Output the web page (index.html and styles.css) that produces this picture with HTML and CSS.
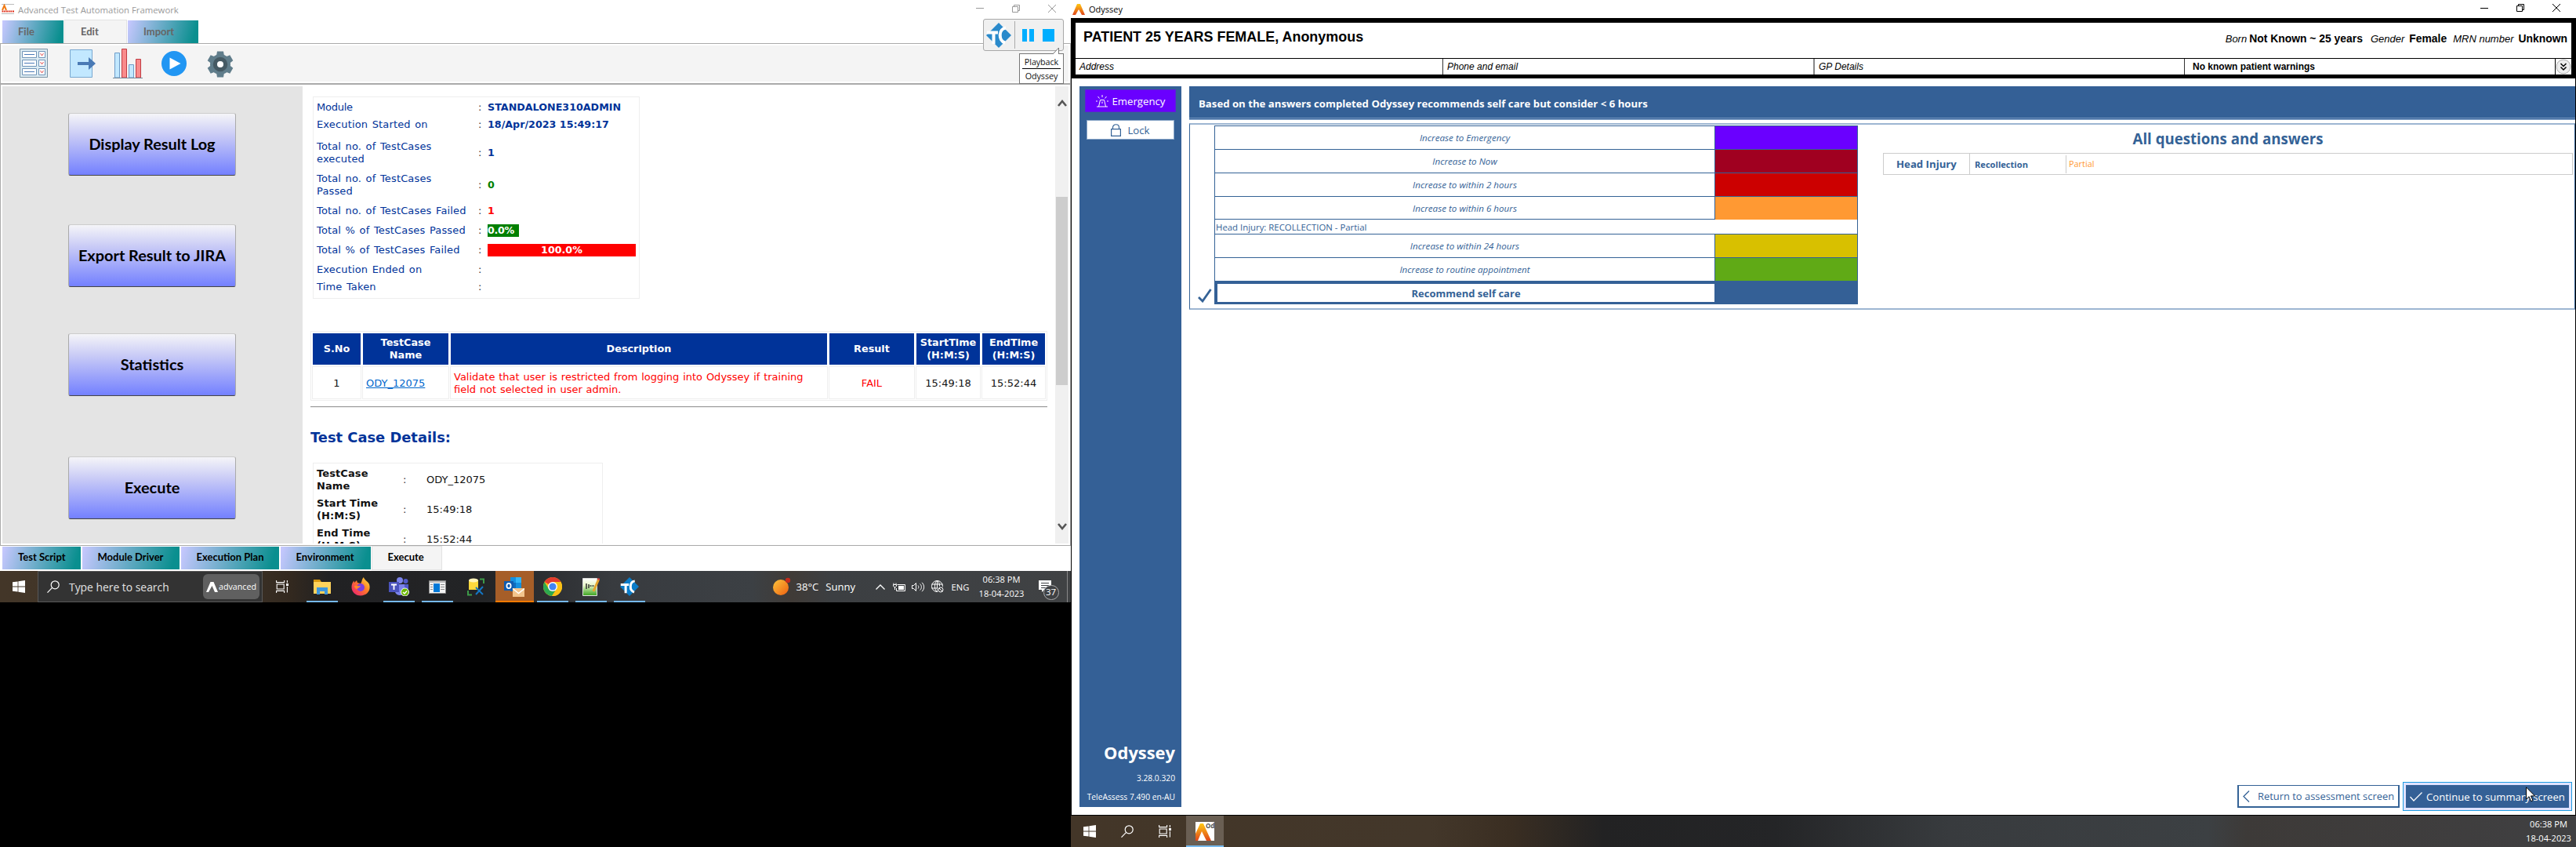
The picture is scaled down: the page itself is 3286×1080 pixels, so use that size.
FILE: index.html
```html
<!DOCTYPE html>
<html lang="en">
<head>
<meta charset="utf-8">
<title>Test Automation and Odyssey</title>
<link rel="stylesheet" href="styles.css">
</head>
<body>
<svg width="0" height="0" class="defs" aria-hidden="true">
  <defs>
    <linearGradient id="flame" x1="0" y1="0" x2="0" y2="1"><stop offset="0" stop-color="#ffc814"/><stop offset="1" stop-color="#e0451b"/></linearGradient>
    <linearGradient id="sun" x1="0" y1="0" x2="1" y2="1"><stop offset="0" stop-color="#fbc53c"/><stop offset="1" stop-color="#ef5f10"/></linearGradient>
    <linearGradient id="fox" x1="1" y1="0" x2="0" y2="1"><stop offset="0" stop-color="#ffe93f"/><stop offset=".45" stop-color="#ff7a28"/><stop offset="1" stop-color="#e8147c"/></linearGradient>
    <linearGradient id="pad" x1="0" y1="0" x2="0" y2="1"><stop offset="0" stop-color="#fff"/><stop offset=".4" stop-color="#e7f6c8"/><stop offset="1" stop-color="#39a31e"/></linearGradient>
    <symbol id="start" viewBox="0 0 16 16"><path fill="#fff" d="M0 2.3 6.6 1.4V7.6H0zM7.4 1.3 16 0V7.6H7.4zM0 8.4H6.6V14.6L0 13.7zM7.4 8.4H16V16L7.4 14.7z"/></symbol>
    <symbol id="lens" viewBox="0 0 16 16"><g fill="none" stroke="#fff" stroke-width="1.2"><circle cx="10.2" cy="5.8" r="5"/><path d="M6.6 9.4.5 15.6"/></g></symbol>
    <symbol id="tasks" viewBox="0 0 16 16"><path fill="none" stroke="#fff" stroke-width="1.1" d="M.6 0v3M.6 13v3M10.6 0v3M10.6 13v3M.6 2.6h10M.6 13.4h10M1.2 5h9v6h-9zM14.4 0v3M14.4 8v7.5"/><path fill="#fff" d="M13 4h3v3h-3z"/></symbol>
    <symbol id="tc" viewBox="0 0 32 32"><path fill="currentColor" d="M16 0 32 16 16 32 0 16z"/><path fill="none" stroke="#fff" stroke-width="4" d="M1 12.500h14M9.500 12v15M25 6.500c-9 1-10 16-1 19"/></symbol>
    <symbol id="restore" viewBox="0 0 10 10"><path fill="none" stroke="currentColor" d="M.5 2.500h7v7h-7zM2.500 2V.5h7v7H8"/></symbol>
    <symbol id="cross" viewBox="0 0 10 10"><path fill="none" stroke="currentColor" d="M0 0l10 10M10 0 0 10"/></symbol>
  </defs>
</svg>

<section class="screen-left">
  <div class="fw">
    <header class="fw-title">
      <svg class="fw-logo" width="16" height="13" viewBox="0 0 16 13"><path fill="#bbb" d="M0 0h16v1H0zM0 12h16v1H0z"/><path fill="none" stroke="#f07a14" stroke-width="2" d="M1 8 3.500 2 6 8"/><path stroke="#e0301c" stroke-width="2" stroke-dasharray="2 .7" d="M.5 9.500h15.500"/></svg>
      <span>Advanced Test Automation Framework</span>
      <div class="winbtns"><i class="min"></i><svg width="10" height="10"><use href="#restore"/></svg><svg width="10" height="10"><use href="#cross"/></svg></div>
    </header>
    <nav class="tabs tabs-top">
      <span class="tab w78">File</span><span class="tab on w80">Edit</span><span class="tab w89">Import</span>
    </nav>
    <div class="frame">
      <div class="tools">
        <svg class="t1" width="36" height="37" viewBox="0 0 36 37"><path fill="#dcebf2" stroke="#7d95a5" d="M.5.5h35v36H.5z"/><g fill="#fff" stroke="#6f94b8"><path d="M3.500 3.500h18v8h-18zM3.500 14.500h18v8h-18zM3.500 25.500h18v8h-18zM24.500 3.500h8v8h-8zM24.500 14.500h8v8h-8zM24.500 25.500h8v8h-8z"/></g><path stroke="#4a7ab8" d="M6 7.500h13M6 18.500h13M6 29.500h13"/><path fill="none" stroke="#e05050" d="M26.500 6l2 3 2-3M26.500 17l2 3 2-3M26.500 28l2 3 2-3"/></svg>
        <svg class="t2" width="33" height="36" viewBox="0 0 33 36"><path fill="#c2e8ff" stroke="#7aa8d0" d="M.5.5h28v35H.5z"/><path fill="#4a7ab5" d="M10 16h14V10l9 8-9 8v-6H10z"/></svg>
        <svg class="t3" width="38" height="38" viewBox="0 0 38 38"><g fill="#c2e8ff" stroke="#6d9cc8"><path d="M2.500 5.500h6V37h-6zM20.500 20.500h6V37h-6z"/></g><g fill="#f98b8b" stroke="#c03c44"><path d="M11.500.5h6V37h-6zM29.500 13.500h6V37h-6z"/></g><path stroke="#788b9c" d="M0 37.500h38"/></svg>
        <svg class="t4" width="32" height="32" viewBox="0 0 32 32"><circle cx="16" cy="16" r="16" fill="#2196f3"/><path fill="#fff" d="M10.500 8.500 24.500 16l-14 7.500z"/></svg>
        <svg class="t5" width="34" height="34" viewBox="-17 -17 34 34"><g fill="#607d8b"><circle r="13"/><path id="cog" d="M-4-16.500h8l1 6H-5zM-4 16.500h8l1-6H-5z"/><use href="#cog" transform="rotate(60)"/><use href="#cog" transform="rotate(120)"/></g><circle r="6.500" fill="none" stroke="#455a64" stroke-width="5.500"/><circle r="4" fill="#fff"/></svg>
      </div>
      <div class="work">
        <aside class="actions">
          <button>Display Result Log</button><button>Export Result to JIRA</button><button class="third">Statistics</button><button class="fourth">Execute</button>
        </aside>
        <main class="report">
          <div class="summary">
            <div class="row h22"><span class="k tight">Module</span><i>:</i><b>STANDALONE310ADMIN</b></div>
            <div class="row h22"><span class="k">Execution Started on</span><i>:</i><b class="wide">18/Apr/2023 15:49:17</b></div>
            <div class="row h41 first"><span class="k">Total no. of TestCases<br>executed</span><i>:</i><b>1</b></div>
            <div class="row h41"><span class="k">Total no. of TestCases<br>Passed</span><i>:</i><b class="ok">0</b></div>
            <div class="row h25"><span class="k">Total no. of TestCases Failed</span><i>:</i><b class="bad">1</b></div>
            <div class="row h25"><span class="k">Total % of TestCases Passed</span><i>:</i><b class="bar-ok">0.0%</b></div>
            <div class="row h25"><span class="k">Total % of TestCases Failed</span><i>:</i><b class="bar-bad">100.0%</b></div>
            <div class="row h25"><span class="k">Execution Ended on</span><i>:</i></div>
            <div class="row h19"><span class="k">Time Taken</span><i>:</i></div>
          </div>
          <div class="results">
            <b>S.No</b><b>TestCase<br>Name</b><b>Description</b><b>Result</b><b>StartTime<br>(H:M:S)</b><b>EndTime<br>(H:M:S)</b>
            <span>1</span><span class="left"><a>ODY_12075</a></span><span class="left red desc">Validate that user is restricted from logging into Odyssey if training<br>field not selected in user admin.</span><span class="red">FAIL</span><span>15:49:18</span><span>15:52:44</span>
          </div>
          <div class="rule"></div>
          <h2>Test Case Details:</h2>
          <div class="details">
            <b>TestCase<br>Name</b><i>:</i><span>ODY_12075</span>
            <b>Start Time<br>(H:M:S)</b><i>:</i><span>15:49:18</span>
            <b>End Time<br>(H:M:S)</b><i>:</i><span>15:52:44</span>
          </div>
        </main>
        <div class="scroll">
          <svg width="12" height="9" viewBox="0 0 12 9"><path fill="none" stroke="#555" stroke-width="2.600" d="M1 8l5-6 5 6"/></svg>
          <div class="thumb"></div>
          <svg width="12" height="9" viewBox="0 0 12 9"><path fill="none" stroke="#555" stroke-width="2.600" d="M1 1l5 6 5-6"/></svg>
        </div>
      </div>
    </div>
    <nav class="tabs tabs-bottom">
      <span class="tab w99">Test Script</span><span class="tab w124">Module Driver</span><span class="tab w125">Execution Plan</span><span class="tab w115">Environment</span><span class="tab on w88">Execute</span>
    </nav>
    <div class="player">
      <svg class="tclogo" width="32" height="32"><use href="#tc"/></svg><i class="sep"></i><i class="pause"></i><i class="stop"></i>
    </div>
    <div class="callout"><span>Playback</span><span>Odyssey</span>
      <svg width="10" height="9" viewBox="0 0 10 9"><path fill="#fff" stroke="#777" d="M0 8 7.500 0V8"/></svg></div>
  </div>

  <footer class="taskbar tb-left">
    <svg class="go" width="16" height="16"><use href="#start"/></svg>
    <div class="search"><svg width="16" height="16"><use href="#lens"/></svg><span>Type here to search</span>
      <div class="adv"><svg width="15" height="13" viewBox="0 0 15 13"><path fill="#fff" d="M5.500 0h4L15 13h-4L7.500 5 3 13H0z"/></svg>advanced</div></div>
    <svg class="tv" width="16" height="16"><use href="#tasks"/></svg>
    <div class="apps">
      <span class="app run"><svg width="22" height="19" viewBox="0 0 22 19"><path fill="#d99a10" d="M0 0h8l2 3v3H0z"/><path fill="#ffd35c" d="M0 3h22v15H0z"/><path fill="#3f97dc" d="M4 19v-9h14v9h-4v-4H8v4z"/></svg></span>
      <span class="app"><svg width="24" height="24" viewBox="0 0 24 24"><path fill="url(#fox)" d="M12 23.500C5 23.500.5 18.500.5 12.500.5 9 2 6 3.500 4.500L4 7l3-3 1 3 4 1c2-2 1-5 4-8 0 3 5 5 7 9 2.500 8-3 14.500-11 14.500z"/><circle cx="12" cy="13" r="5" fill="#7a3fe0"/><path fill="#ff8a28" d="M4 11c4-1 4 1 8 0-1 3-4 2-4 4-3 0-4-2-4-4z"/></svg></span>
      <span class="app run"><svg width="26" height="24" viewBox="0 0 26 24"><circle cx="14" cy="4" r="4" fill="#7b83eb"/><circle cx="21.500" cy="5" r="3" fill="#5059c9"/><path fill="#5059c9" d="M17 9h8v9c0 3-4 4-6 2z"/><path fill="#7b83eb" d="M8 9h12v9c0 6-10 7-12 1z"/><path fill="#4b53bc" d="M0 6h13v13H0z"/><path fill="none" stroke="#fff" stroke-width="1.800" d="M3 9.500h7M6.500 9.500V16"/><circle cx="20.500" cy="19" r="5" fill="#6bb700" stroke="#fff"/><path fill="none" stroke="#fff" stroke-width="1.500" d="M18 19l2 2 3-3.500"/></svg></span>
      <span class="app run"><svg width="22" height="17" viewBox="0 0 22 17"><path fill="#f3f3f3" stroke="#888" d="M.5.5h21v16H.5z"/><path fill="#0078d7" d="M6 4h8v11H6z"/><path stroke="#888" d="M2 5.500h3M2 8.500h3M2 11.500h3M15 5.500h5M15 8.500h5M15 11.500h5M1 2h20"/></svg></span>
      <span class="app"><svg width="22" height="23" viewBox="0 0 22 23"><path fill="#ffd83c" d="M2 3h12v12H2z"/><ellipse cx="8" cy="3" rx="6" ry="2.500" fill="#fff3b8"/><path fill="none" stroke="#3c9a48" stroke-width="2" d="M16 1.500h5V7M1 16v5.500h5"/><path fill="none" stroke="#1476c4" stroke-width="2" d="M11 12l9 9M20 11l-9 10"/></svg></span>
      <span class="app mail"><svg width="26" height="25" viewBox="0 0 26 25"><path fill="#0f6cbd" d="M8 0h14v18H8z"/><path fill="#32b5f5" d="M15 0h7v7h-7z"/><path fill="#1490df" d="M8 0h7v7H8zM15 7h7v7h-7z"/><path fill="#0f5cb0" d="M0 5h12v12H0z"/><ellipse cx="6" cy="11" rx="2.600" ry="3.200" fill="none" stroke="#fff" stroke-width="1.800"/><path fill="#f2c48d" d="M11 14h15v11H11z"/><path fill="none" stroke="#fff" stroke-width="1.500" d="M11 14.500l7.500 6 7.500-6"/></svg></span>
      <span class="app run"><svg width="24" height="24" viewBox="0 0 24 24"><circle cx="12" cy="12" r="12" fill="#fbc116"/><path fill="#e33b2e" d="M12 12 1.600 6A12 12 0 0 1 22.400 6H12z"/><path fill="#2da94f" d="M12 12l-5 3L1.600 6A12 12 0 0 0 11 24l6-9z"/><path fill="#fbc116" d="M12 6h10.400A12 12 0 0 1 11 24l6-9z"/><circle cx="12" cy="12" r="6" fill="#fff"/><circle cx="12" cy="12" r="4.600" fill="#4285f4"/></svg></span>
      <span class="app run"><svg width="22" height="23" viewBox="0 0 22 23"><path fill="url(#pad)" stroke="#ddd" d="M.5.5h18v22H.5z"/><path stroke="#333" stroke-width="1.500" d="M5 7v7M8 8v5M9.500 10h2M12.500 10h2"/><path stroke="#e6a52c" stroke-width="3" d="M20.500 2 14 17"/><path stroke="#d44" stroke-width="3" d="M21 .5l-.7 2"/></svg></span>
      <span class="app run tcblue"><svg width="24" height="24"><use href="#tc"/></svg></span>
    </div>
    <div class="weather"><svg width="24" height="24" viewBox="0 0 24 24"><circle cx="10" cy="13" r="10" fill="url(#sun)"/><circle cx="19" cy="4" r="3.200" fill="#c42b1c"/></svg><span>38°C</span><span>Sunny</span></div>
    <div class="tray">
      <svg width="12" height="7" viewBox="0 0 12 7"><path fill="none" stroke="#fff" stroke-width="1.300" d="M.5 6.500 6 1l5.500 5.500"/></svg>
      <svg width="16" height="11" viewBox="0 0 16 11"><path fill="none" stroke="#fff" d="M5.500 2.500h10v8h-11V7M1 .5v2M4 .5v2M.5 2.500h4v2l-1 1h-2l-1-1zM2.500 6v3"/><path fill="#fff" d="M7 4h7v5H7z"/></svg>
      <svg width="17" height="13" viewBox="0 0 17 13"><path fill="none" stroke="#fff" d="M.5 4.500h2l3-3v10l-3-3h-2zM8 4.500c1 1 1 3 0 4M10.500 2.500c2.500 2 2.500 6 0 8M13 .8c3.500 3 3.500 8.400 0 11.400"/></svg>
      <svg width="16" height="16" viewBox="0 0 16 16"><g fill="none" stroke="#fff"><circle cx="7.500" cy="7.500" r="7"/><ellipse cx="7.500" cy="7.500" rx="3" ry="7"/><path d="M.5 5h14M.5 10h14M7.500 0v15"/></g><circle cx="12" cy="12" r="4.500" fill="#3f4144"/><circle cx="12" cy="12" r="3" fill="none" stroke="#fff"/><path stroke="#fff" d="M10 10l4 4"/></svg>
      <span>ENG</span>
    </div>
    <div class="clock"><span>06:38 PM</span><span>18-04-2023</span></div>
    <div class="notes"><svg width="16" height="16" viewBox="0 0 16 16"><path fill="#fff" d="M0 0h16v12H7l-3 3v-3H0z"/><path stroke="#3f4144" d="M3 3.500h10M3 6.500h10M3 9.500h6"/></svg><em>37</em></div>
  </footer>
</section>

<section class="screen-right">
  <header class="od-title">
    <svg width="16" height="14" viewBox="0 0 16 14"><path fill="url(#flame)" d="M6 0h4l6 14h-4L8 7 4 14H0z"/></svg><span>Odyssey</span>
    <div class="winbtns dark"><i class="min"></i><svg width="10" height="10"><use href="#restore"/></svg><svg width="10" height="10"><use href="#cross"/></svg></div>
  </header>
  <div class="patient">
    <div class="who"><b>PATIENT 25 YEARS FEMALE, Anonymous</b>
      <p><i>Born</i><b class="m1">Not Known ~ 25 years</b><i class="m2">Gender</i><b class="m3">Female</b><i class="m4">MRN number</i><b class="m5">Unknown</b></p></div>
    <div class="facts"><i>Address</i><i>Phone and email</i><i class="grey">GP Details</i><b>No known patient warnings</b>
      <span class="more"><svg width="20" height="20" viewBox="0 0 20 20"><circle cx="10" cy="10" r="9" fill="#eee" stroke="#aaa"/><path fill="none" stroke="#000" stroke-width="1.500" d="M6.500 6l3.500 3.500L13.500 6M6.500 10.500 10 14l3.500-3.500"/></svg></span></div>
  </div>
  <div class="od-body">
    <aside class="od-side">
      <button class="emerg"><svg width="16" height="16" viewBox="0 0 16 16"><path fill="none" stroke="#fff" d="M1 15h14M3.500 15l2-8.500h5l2 8.500M8 0v3M2.500 2l2 2.500M13.500 2l-2 2.500M0 8h2M14 8h2M8 8.500v2.500"/></svg>Emergency</button>
      <button class="lock"><svg width="13" height="16" viewBox="0 0 13 16"><path fill="none" stroke="#346296" stroke-width="1.200" d="M.6 6.600h11.800v8.800H.6zM2.500 6.500V4.500c0-5 8-5 8 0v2"/></svg>Lock</button>
      <div class="brand"><b>Odyssey</b><span>3.28.0.320</span><span>TeleAssess 7.490 en-AU</span></div>
    </aside>
    <main class="od-main">
      <div class="banner">Based on the answers completed Odyssey recommends self care but consider &lt; 6 hours</div>
      <div class="panel">
        <div class="tick"><svg width="18" height="18" viewBox="0 0 18 18"><path fill="none" stroke="#346296" stroke-width="2.800" d="M1 11l5 5L16.500 1"/></svg></div>
        <div class="triage">
          <div class="lv"><i>Increase to Emergency</i><s class="c1"></s></div>
          <div class="lv"><i>Increase to Now</i><s class="c2"></s></div>
          <div class="lv"><i>Increase to within 2 hours</i><s class="c3"></s></div>
          <div class="lv short"><i>Increase to within 6 hours</i><s class="c4"></s></div>
          <div class="reason">Head Injury: RECOLLECTION - Partial</div>
          <div class="lv"><i>Increase to within 24 hours</i><s class="c5"></s></div>
          <div class="lv"><i>Increase to routine appointment</i><s class="c6"></s></div>
          <div class="chosen"><b>Recommend self care</b></div>
        </div>
        <div class="qa">
          <h3>All questions and answers</h3>
          <div class="answers"><b class="topic">Head Injury</b><b class="q">Recollection</b><span>Partial</span></div>
        </div>
      </div>
      <div class="nav">
        <button class="back"><svg width="9" height="15" viewBox="0 0 9 15"><path fill="none" stroke="#346296" stroke-width="1.300" d="M8 .5 1 7.500l7 7"/></svg>Return to assessment screen</button>
        <button class="next"><svg width="16" height="12" viewBox="0 0 16 12"><path fill="none" stroke="#fff" stroke-width="1.300" d="M.5 6l4.500 5L15.500.5"/></svg>Continue to summary screen</button>
      </div>
    </main>
  </div>
  <footer class="taskbar tb-right">
    <svg class="go" width="16" height="16"><use href="#start"/></svg>
    <svg class="tv2" width="16" height="16"><use href="#lens"/></svg>
    <svg class="tv2" width="16" height="16"><use href="#tasks"/></svg>
    <div class="odapp"><svg width="24" height="24" viewBox="0 0 24 24"><path fill="#fff" d="M0 0h24v24H0z"/><path fill="url(#flame)" d="M6 2h4l10 22h-6L8 12 3 24H0V15z"/><text x="13" y="8" font-size="8" font-weight="bold" fill="#555" font-family="Open Sans, sans-serif">Od</text></svg></div>
    <div class="clock end"><span>06:38 PM</span><span>18-04-2023</span></div>
  </footer>
  <svg class="cursor" width="13" height="20" viewBox="0 0 13 20"><path fill="#fff" stroke="#000" d="M.5.8v15.400l3.600-3.500 2.600 6 2.300-1-2.500-5.800h5z"/></svg>
</section>
</body>
</html>
```
FILE: styles.css
```css
* { box-sizing: border-box; }
body { margin: 0; width: 3286px; height: 1080px; background: #000; display: flex; overflow: hidden; font-family: "Open Sans", sans-serif; }
svg { display: block; flex: none; }
.defs { position: absolute; }
i { font-style: normal; }
button { border: 0; padding: 0; margin: 0; background: none; white-space: nowrap; }
.screen-left { width: 1366px; height: 1080px; }
.screen-right { width: 1920px; height: 1080px; position: relative; background: #fff; display: flex; flex-direction: column; }

/* framework window */
.fw { position: relative; width: 1366px; height: 728px; background: #fff; display: flex; flex-direction: column; }
.fw-title { height: 25px; display: flex; align-items: center; padding-left: 2px; font-size: 11.34px; color: #999; }
.fw-title > span { margin-left: 5px; }
.fw-logo { margin-top: -3px; }
.winbtns { margin: -4px 19px 0 auto; display: flex; gap: 36px; align-items: center; color: #999; }
.winbtns .min { width: 10px; height: 1px; background: currentColor; }
.tabs { display: flex; gap: 2px; padding-left: 3px; font: bold 13px Lato, "Open Sans", sans-serif; }
.tab { background: linear-gradient(105deg, #c8c8ff 0%, #0a8f8f 92%); padding-left: 20px; display: flex; align-items: center; white-space: nowrap; }
.tab.on { background: #f4f4f4; box-shadow: 0 0 0 1px #e2e2e2; }
.tabs-top { height: 30px; padding-top: 1px; color: #666; }
.tabs-top .tab { padding-bottom: 2px; }
.tabs-bottom { height: 32px; padding: 1px 0 2px 3px; color: #000; }
.tabs-bottom .tab { padding-bottom: 3px; }
.w78 { width: 78px; } .w80 { width: 78px; } .w89 { width: 90px; }
.w99 { width: 99.500px; } .w124 { width: 124px; } .w125 { width: 125px; } .w115 { width: 115px; } .w88 { width: 88px; }
.frame { height: 641px; border: 1px solid #aaa; display: flex; flex-direction: column; }
.tools { height: 52px; border-bottom: 2px solid #aaa; border-top: 2px solid #fff; display: flex; background: linear-gradient(#f4f4f4, #f4f4f4) 2px 0 / 1360px 46px no-repeat; padding: 4px 0 0 24px; }
.t2 { margin: 1px 0 0 28px; } .t3 { margin-left: 22px; } .t4 { margin: 3px 0 0 24px; } .t5 { margin: 3px 0 0 26px; }
.work { flex: 1; min-height: 0; display: flex; padding: 2px 2px 2px; }
.actions { width: 383px; background: #e4e4e4; display: flex; flex-direction: column; align-items: center; padding: 34px 0 0 0; margin-right: 10px; gap: 62px; }
.actions button { margin-left: -1px; padding-bottom: 2px; width: 214px; height: 80px; border-radius: 3px; border: 1px solid #aaa; border-bottom: 1.500px solid #444; border-top-color: #ccc; background: linear-gradient(#f5f5f8 0%, #c9cbf6 35%, #7380ff 100%); font: bold 19.900px Lato, "Open Sans", sans-serif; color: #000; }
.actions .third { margin-top: -3px; } .actions .fourth { margin-top: 15px; }
.report { width: 950px; padding: 13px 0 0; overflow: hidden; font: 13px/16px "DejaVu Sans", sans-serif; color: #111; }
.summary { width: 417px; height: 258px; margin-left: 3px; border: 1px solid #eee; padding: 2px 4px; color: #003399; }
.row { display: grid; grid-template-columns: 206px 12px 189px; align-items: center; }
.row > i { color: #333; }
.k { letter-spacing: .15px; word-spacing: 1.200px; white-space: nowrap; }
.tight { letter-spacing: -.25px; }
.row > b { font-size: 12.700px; justify-self: start; white-space: nowrap; }
.h22 { height: 22px; } .h41 { height: 41px; } .h25 { height: 25px; } .h19 { height: 19px; }
.first { margin-top: 4px; }
.row .ok { color: #008000; } .row .bad { color: #f00; }
.row .bar-ok { background: #008000; color: #fff; width: 40px; letter-spacing: -.3px; }
.row .bar-bad { background: #f00; color: #fff; justify-self: stretch; text-align: center; }
.results { width: 940px; height: 89px; margin-top: 41px; border: 1px solid #eee; padding: 1px; display: grid; gap: 1px; grid-template-columns: 63px 111px 482px 110px 83px 82px; grid-template-rows: 42px 42px; }
.results > * { border: 1px solid #eee; display: flex; align-items: center; justify-content: center; text-align: center; }
.results > span { padding-top: 1px; }
.results > b { background: #003399; border-color: #fff; color: #fff; font-size: 12.800px; }
.results .left { justify-content: flex-start; text-align: left; padding-left: 4px; }
.results .red { color: #f00; }
.desc { word-spacing: .7px; white-space: nowrap; }
.results a { color: #0066cc; text-decoration: underline; }
.rule { width: 940px; height: 2px; margin-top: 7px; border-top: 1px solid #999; border-bottom: 1px solid #eee; }
h2 { margin: 26px 0 0; font: bold 17.860px/24px "DejaVu Sans", sans-serif; color: #003399; }
.details { width: 370px; height: 150px; margin: 20px 0 0 3px; border: 1px solid #eee; padding: 2px 4px; display: grid; grid-template-columns: 110px 30px 1fr; grid-auto-rows: 38px; align-items: center; align-content: start; }
.details b { font-size: 13px; letter-spacing: .1px; }
.details i { color: #333; }
.scroll { width: 17px; margin-left: auto; background: #f0f0f0; display: flex; flex-direction: column; align-items: center; padding: 17px 0; }
.thumb { width: 15px; height: 240px; margin: 115px 0 auto; background: #cdcdcd; }
.player { position: absolute; left: 1254px; top: 24px; width: 103px; height: 41px; border: 1px solid #a8a8a8; border-radius: 3px; background: #f0f0f0; display: flex; align-items: center; padding-left: 3px; }
.tclogo { color: #2a8acb; }
.sep { width: 1px; height: 35px; background: #aaa; margin: 0 9px 0 4px; }
.pause { width: 15px; height: 16px; border: solid #00aeff; border-width: 0 6px; }
.stop { width: 15px; height: 16px; background: #00aeff; margin-left: 11px; }
.callout { position: absolute; left: 1300px; top: 68px; width: 57px; height: 39px; border: 1px solid #777; background: #fff; padding: 0 3px; font-size: 10.800px; line-height: 18px; color: #111; text-align: center; }
.callout span { display: block; height: 16px; letter-spacing: -.1px; }
.callout span:first-child { height: 19px; border-bottom: 1px solid #000; line-height: 20px; }
.callout svg { position: absolute; right: 3px; top: -8px; }

/* taskbars */
.taskbar { height: 40px; display: flex; align-items: center; color: #fff; }
.tb-left { width: 1366px; position: relative; background: linear-gradient(90deg, #433628 0, #40352a 280px, #33291f 370px, #212123 420px, #232426 620px, #383b3f 780px, #3c4044 960px, #403b37 1010px, #3c3f42 1060px, #404244 100%); }
.go { margin-left: 16px; }
.search { width: 287px; height: 40px; margin-left: 16px; background: #333; border: 1px solid #585858; display: flex; align-items: center; padding: 0 3px 0 11px; color: #e2e2e2; font-size: 13.880px; }
.search > span { margin-left: 12px; white-space: nowrap; }
.adv { margin-left: auto; width: 72px; height: 32px; border-radius: 6px; background: #606060; display: flex; align-items: center; justify-content: center; gap: 1px; font-size: 10.690px; color: #fff; }
.tv { margin-left: 17px; }
.apps { display: flex; margin-left: 18.500px; height: 40px; }
.app { width: 49px; height: 40px; display: flex; align-items: center; justify-content: center; background: linear-gradient(#76b9ed, #76b9ed) center bottom / 0 2px no-repeat; }
.app.run { background-size: 40px 2px; }
.app.mail { background: linear-gradient(#ff7a00, #ff7a00) center bottom / 100% 2px no-repeat #a65e28; }
.tcblue { color: #0a7cc8; }
.weather { display: flex; align-items: center; margin-left: 158px; font-size: 13.100px; width: 131px; }
.weather svg { margin-right: 6px; }
.weather span + span { margin-left: 9px; }
.tray { display: flex; align-items: center; font-size: 11.200px; width: 137px; }
.tray svg + svg { margin-left: 8px; }
.tray svg:first-child + svg { margin-left: 10px; }
.tray span { margin-left: 10px; }
.clock { width: 58px; text-align: center; font-size: 11.100px; line-height: 18px; display: flex; flex-direction: column; white-space: nowrap; }
.tray + .clock { margin-left: -5px; margin-top: -1px; }
.notes { position: relative; margin-left: 18px; width: 37px; border-right: 1px solid #888; height: 40px; padding-top: 12px; }
.notes em { position: absolute; left: 6px; top: 18px; width: 20px; height: 19px; border-radius: 10px; border: 1px solid #aaa; background: #3f4144; font: 11.500px/16px "Open Sans", sans-serif; text-align: center; }

/* odyssey window */
.od-title { height: 23px; flex: none; display: flex; align-items: center; padding-left: 2px; font-size: 11px; color: #000; }
.od-title > span { margin-left: 5px; }
.winbtns.dark { color: #000; margin-top: -3px; margin-right: 20px; }
.patient { height: 77px; flex: none; border: 6px solid #000; border-bottom-width: 5px; font-family: "Liberation Sans", Arial, sans-serif; color: #000; }
.who { height: 46px; border-bottom: 1px solid #000; display: flex; align-items: center; justify-content: space-between; padding: 0 5px 9px 10px; font-size: 17.950px; }
.who p { margin: 4px 0 0; font-size: 13px; display: flex; white-space: nowrap; }
.who p b { font-size: 13.900px; line-height: 15px; }
.who i, .facts i { font-style: italic; }
.m1 { margin-left: 3px; } .m2 { margin-left: 10px; } .m3 { margin-left: 6px; } .m4 { margin-left: 8px; } .m5 { margin-left: 6px; }
.facts { height: 20px; display: grid; grid-template-columns: 468px 473px 473px 473px 21px; font-size: 12px; line-height: 20px; }
.facts > * { padding-left: 5px; }
.facts > * + * { border-left: 1px solid #333; }
.facts .grey { border-left: 2px solid #888; }
.facts b { padding-left: 10px; }
.facts .more { padding-left: 0; border-color: #000; }
.od-body { flex: 1; border: 1px solid #000; border-top: 0; display: flex; padding: 10px 0 10px 10px; min-height: 0; }
.od-side { width: 130px; background: #346096; display: flex; flex-direction: column; align-items: center; padding: 4px 8px 1px; color: #fff; }
.od-side button { display: flex; align-items: center; justify-content: center; font: 13.200px "Open Sans", sans-serif; gap: 5px; }
.emerg { width: 116px; height: 29px; background: #6a00ff; border: 1px solid #5c1fd8; color: #fff; }
.lock { width: 112px; height: 25px; margin-top: 10px; background: #fff; border: 1px solid #8aa6c8; color: #346296; }
.od-side .lock { gap: 8px; }
.brand { margin-top: auto; align-self: stretch; text-align: right; font-size: 10.250px; line-height: 24px; display: flex; flex-direction: column; white-space: nowrap; }
.brand b { font-size: 21.900px; line-height: 40px; }
.od-main { flex: 1; margin-left: 10px; display: flex; flex-direction: column; }
.banner { height: 43px; background: linear-gradient(#346096, #346096) 0 0 / 100% 40px no-repeat, linear-gradient(#7496c0 0 1px, #346096 1px 2px, #8aa8cc 2px) 0 40px / 100% 3px no-repeat; color: #fff; font: bold 13.190px/44px "Open Sans", sans-serif; padding-left: 12px; }
.panel { height: 238px; margin-top: 4px; border: 1px solid #346296; border-top: 2px solid #9db6d2; border-bottom: 2px solid #9db6d2; display: flex; padding-top: 1px; color: #346296; }
.tick { width: 31px; padding: 208px 0 0 10px; }
.triage { width: 821px; height: 228px; border: 1px solid #346296; font-size: 11.650px; }
.lv { height: 30px; display: grid; grid-template-columns: 638px 1fr; border-bottom: 1px solid #346296; text-align: center; line-height: 29px; }
.lv i { font-style: italic; border-right: 1px solid #346296; }
.lv.short { height: 29px; }
.reason { height: 19px; line-height: 19px; border-bottom: 1px solid #346296; padding-left: 1px; font-size: 11.380px; }
.c1 { background: #6a00ff; } .c2 { background: #a00020; } .c3 { background: #cc0000; } .c4 { background: #ff9933; } .c5 { background: #d8c000; } .c6 { background: #60aa16; }
.chosen { height: 28px; background: #346096; padding: 3px 0 2px 3px; }
.chosen b { display: block; width: 634px; height: 23px; background: #fff; text-align: center; font-size: 13.030px; line-height: 24px; }
.qa { flex: 1; padding: 0 2px 0 32px; }
h3 { margin: 0; height: 35px; font: bold 18.660px/34px "Open Sans", sans-serif; text-align: center; }
.answers { height: 28px; border: 1px solid #ccc; display: flex; align-items: center; line-height: 24px; }
.topic { width: 110px; height: 26px; line-height: 26px; border-right: 1px solid #ccc; padding-left: 16px; font-size: 13.200px; white-space: nowrap; }
.q { width: 123px; height: 23px; border-right: 1px solid #ccc; padding-left: 6px; font-size: 11.120px; }
.answers span { padding-left: 3px; font-size: 10.900px; color: #ff9933; }
.nav { margin: auto 4px -5px auto; display: flex; align-items: center; gap: 4px; }
.nav button { display: flex; align-items: center; font: 13px "Open Sans", sans-serif; }
.back { width: 207px; height: 29px; border: 2px solid #346296; border-top-width: 1px; color: #346296; padding-left: 6px; gap: 10px; }
.nav .back { font-size: 12.920px; padding-left: 5px; }
.next { width: 216px; height: 37px; border: 1px solid #1e9be0; box-shadow: inset 0 0 0 3px #dfe2ff; color: #fff; background: #346096; }
.nav .next { padding-left: 8px; gap: 5px; font-size: 13.120px; }
.tb-right { flex: none; background: linear-gradient(90deg, #433628 0, #43372a 460px, #3a2e22 560px, #222223 680px, #242527 900px, #383b3e 1120px, #3c4043 1450px, #3d3a38 1500px, #404042 100%); }
.tv2 { margin-left: 32px; }
.odapp { width: 48px; height: 40px; margin-left: 19px; background: #6a5f53; border-bottom: 2px solid #76b9ed; padding: 8px 12px; }
.clock.end { margin-left: auto; margin-right: 6px; margin-top: -1px; }
.cursor { position: absolute; left: 1856px; top: 1003px; }
```
